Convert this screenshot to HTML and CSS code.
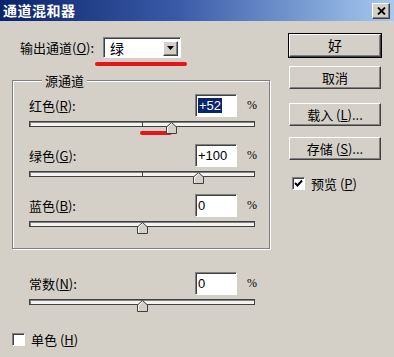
FILE: index.html
```html
<!DOCTYPE html>
<html lang="zh-CN">
<head>
    <meta charset="UTF-8">
    <meta name="viewport" content="width=device-width, initial-scale=1.0">
    <title>通道混和器</title>
    <link rel="stylesheet" href="styles.css">
</head>
<body>
    <div class="window">
        <div class="titlebar">
            <span class="title">通道混和器</span>
            <span class="close-btn">
                <svg width="9" height="8" viewBox="0 0 9 8"><path d="M1 0.5 L8 7.5 M8 0.5 L1 7.5" stroke="#000" stroke-width="1.8"/></svg>
            </span>
        </div>

        <div class="body">
            <div class="main">
                <div class="output-row">
                    <span class="label">输出通道(<u>O</u>):</span>
                    <div class="select">
                        <span class="select-value">绿</span>
                        <span class="select-arrow">
                            <svg width="7" height="4" viewBox="0 0 7 4"><path d="M0 0 H7 L3.5 4 Z" fill="#000"/></svg>
                        </span>
                    </div>
                </div>
                <div class="mark mark-output"></div>

                <fieldset class="group">
                    <legend>源通道</legend>

                    <div class="channel">
                        <div class="channel-row">
                            <span class="label">红色(<u>R</u>):</span>
                            <span class="field"><span class="selected">+52</span></span>
                            <span class="pct">%</span>
                        </div>
                        <div class="track">
                            <span class="thumb" style="left: 63%"><svg width="11" height="12" viewBox="0 0 11 12"><path d="M0.5 11.5 V5 L5.5 0.5 L10.5 5 V11.5 Z" fill="#d4d0c8" stroke="#404040"/><path d="M1.5 10.5 V5.4 L5.5 1.8" fill="none" stroke="#fff"/></svg></span>
                            <span class="mark mark-slider"></span>
                        </div>
                    </div>

                    <div class="channel">
                        <div class="channel-row">
                            <span class="label">绿色(<u>G</u>):</span>
                            <span class="field">+100</span>
                            <span class="pct">%</span>
                        </div>
                        <div class="track">
                            <span class="thumb" style="left: 75%"><svg width="11" height="12" viewBox="0 0 11 12"><path d="M0.5 11.5 V5 L5.5 0.5 L10.5 5 V11.5 Z" fill="#d4d0c8" stroke="#404040"/><path d="M1.5 10.5 V5.4 L5.5 1.8" fill="none" stroke="#fff"/></svg></span>
                        </div>
                    </div>

                    <div class="channel">
                        <div class="channel-row">
                            <span class="label">蓝色(<u>B</u>):</span>
                            <span class="field">0</span>
                            <span class="pct">%</span>
                        </div>
                        <div class="track">
                            <span class="thumb" style="left: 50%"><svg width="11" height="12" viewBox="0 0 11 12"><path d="M0.5 11.5 V5 L5.5 0.5 L10.5 5 V11.5 Z" fill="#d4d0c8" stroke="#404040"/><path d="M1.5 10.5 V5.4 L5.5 1.8" fill="none" stroke="#fff"/></svg></span>
                        </div>
                    </div>
                </fieldset>

                <div class="channel constant">
                    <div class="channel-row">
                        <span class="label">常数(<u>N</u>):</span>
                        <span class="field">0</span>
                        <span class="pct">%</span>
                    </div>
                    <div class="track">
                        <span class="thumb" style="left: 50%"><svg width="11" height="12" viewBox="0 0 11 12"><path d="M0.5 11.5 V5 L5.5 0.5 L10.5 5 V11.5 Z" fill="#d4d0c8" stroke="#404040"/><path d="M1.5 10.5 V5.4 L5.5 1.8" fill="none" stroke="#fff"/></svg></span>
                    </div>
                </div>

                <div class="check check-mono">
                    <span class="box"></span>
                    <span class="check-label">单色 (<u>H</u>)</span>
                </div>
            </div>

            <div class="side">
                <button class="btn btn-default">好</button>
                <button class="btn btn-cancel">取消</button>
                <button class="btn btn-load">载入 (<u>L</u>)...</button>
                <button class="btn btn-save">存储 (<u>S</u>)...</button>
                <div class="check check-preview">
                    <span class="box">
                        <svg width="9" height="9" viewBox="0 0 9 9"><path d="M1 4 L3.5 6.5 L8 1.5" fill="none" stroke="#000" stroke-width="2"/></svg>
                    </span>
                    <span class="check-label">预览 (<u>P</u>)</span>
                </div>
            </div>
        </div>
    </div>
</body>
</html>
```

FILE: styles.css
```css
body {
    margin: 0;
    padding: 0;
    background-color: #d4d0c8;
    font-family: 'Noto Sans CJK SC', 'Liberation Sans', sans-serif;
    font-size: 13px;
    color: #000;
}
.window {
    width: 394px;
    height: 357px;
    overflow: hidden;
}
.titlebar {
    height: 21px;
    display: flex;
    align-items: center;
    justify-content: space-between;
    padding: 0 4px 0 3px;
    background: linear-gradient(to right, #0a246a, #3a5aa8 45%, #a6caf0);
    box-sizing: border-box;
}
.title {
    color: #fff;
    font-weight: bold;
    font-size: 14px;
    letter-spacing: 0.5px;
    line-height: 21px;
}
.close-btn {
    width: 16px;
    height: 14px;
    margin-top: 1px;
    display: flex;
    align-items: center;
    justify-content: center;
    background: #d4d0c8;
    border: 1px solid;
    border-color: #fff #404040 #404040 #fff;
    box-shadow: inset -1px -1px #808080;
}
.body {
    display: flex;
    padding-left: 12px;
}
.main {
    width: 258px;
}
.label {
    line-height: 15px;
}
.output-row {
    display: flex;
    align-items: center;
    margin-top: 16px;
    padding-left: 8px;
}
.select {
    width: 78px;
    height: 21px;
    margin-left: 9px;
    display: flex;
    align-items: center;
    justify-content: space-between;
    background: #fff;
    border: 1px solid;
    border-color: #808080 #fff #fff #808080;
    box-shadow: inset 1px 1px #404040;
    box-sizing: border-box;
    padding: 2px 2px 1px 6px;
}
.select-value {
    font-size: 14px;
    line-height: 16px;
}
.select-arrow {
    width: 15px;
    height: 15px;
    display: flex;
    align-items: center;
    justify-content: center;
    background: #d4d0c8;
    border: 1px solid;
    border-color: #fff #404040 #404040 #fff;
    box-shadow: inset -1px -1px #808080;
    box-sizing: border-box;
}
.mark {
    background: #e8141c;
    border-radius: 2px;
    height: 4px;
}
.mark-output {
    width: 92px;
    margin: 4px 0 0 83px;
}
.group {
    margin: 7px 0 0 0;
    padding: 6px 14px 21px 16px;
    border: 1px solid #808080;
    box-shadow: inset 1px 1px #fff, 1px 1px #fff;
}
.group legend {
    margin-left: 13px;
    padding: 0 3px;
    line-height: 15px;
    background: #d4d0c8;
}
.channel {
    margin-bottom: 17px;
}
.group .channel:last-child {
    margin-bottom: 0;
}
.channel-row {
    display: flex;
    align-items: center;
    height: 23px;
}
.channel-row .label {
    flex: 1;
}
.field {
    width: 42px;
    height: 23px;
    padding: 2px 0 0 2px;
    background: #fff;
    border: 1px solid;
    border-color: #808080 #fff #fff #808080;
    box-shadow: inset 1px 1px #404040;
    box-sizing: border-box;
    font-family: 'Liberation Sans', sans-serif;
    font-size: 13px;
    line-height: 18px;
}
.selected {
    background: #0a246a;
    color: #fff;
    padding: 0 1px;
}
.pct {
    width: 8px;
    margin-left: 10px;
    font-family: 'Liberation Serif', serif;
    font-size: 12px;
}
.track {
    position: relative;
    height: 6px;
    margin-top: 4px;
    background: #f4f3f0;
    border: 1px solid #404040;
    box-shadow: inset 1px 1px #808080;
    box-sizing: border-box;
}
.track::after {
    content: '';
    position: absolute;
    left: 50%;
    top: 0;
    bottom: 0;
    width: 1px;
    background: #404040;
}
.thumb {
    position: absolute;
    top: 0;
    margin-left: -5px;
    width: 11px;
    height: 12px;
    z-index: 1;
}
.thumb svg {
    display: block;
}
.mark-slider {
    position: absolute;
    left: 110px;
    top: 9px;
    width: 32px;
}
.constant {
    margin: 23px 0 0 0;
    padding: 0 15px 0 17px;
}
.check {
    display: flex;
    align-items: center;
}
.box {
    width: 13px;
    height: 13px;
    display: flex;
    align-items: center;
    justify-content: center;
    background: #fff;
    border: 1px solid;
    border-color: #808080 #fff #fff #808080;
    box-shadow: inset 1px 1px #404040;
    box-sizing: border-box;
}
.check-label {
    margin-left: 6px;
    line-height: 15px;
}
.check-mono {
    margin-top: 27px;
}
.side {
    width: 92px;
    margin-left: 19px;
    display: flex;
    flex-direction: column;
}
.btn {
    height: 23px;
    padding: 0;
    background: #d4d0c8;
    border: 1px solid;
    border-color: #fff #404040 #404040 #fff;
    box-shadow: inset -1px -1px #808080;
    font-family: 'Noto Sans CJK SC', 'Liberation Sans', sans-serif;
    font-size: 13px;
    color: #000;
    line-height: 15px;
}
.btn-default {
    margin-top: 13px;
    outline: 1px solid #000;
    font-size: 14px;
}
.btn-cancel {
    margin-top: 9px;
}
.btn-load {
    margin-top: 14px;
}
.btn-save {
    margin-top: 11px;
}
.check-preview {
    margin-top: 16px;
    padding-left: 3px;
}
```
